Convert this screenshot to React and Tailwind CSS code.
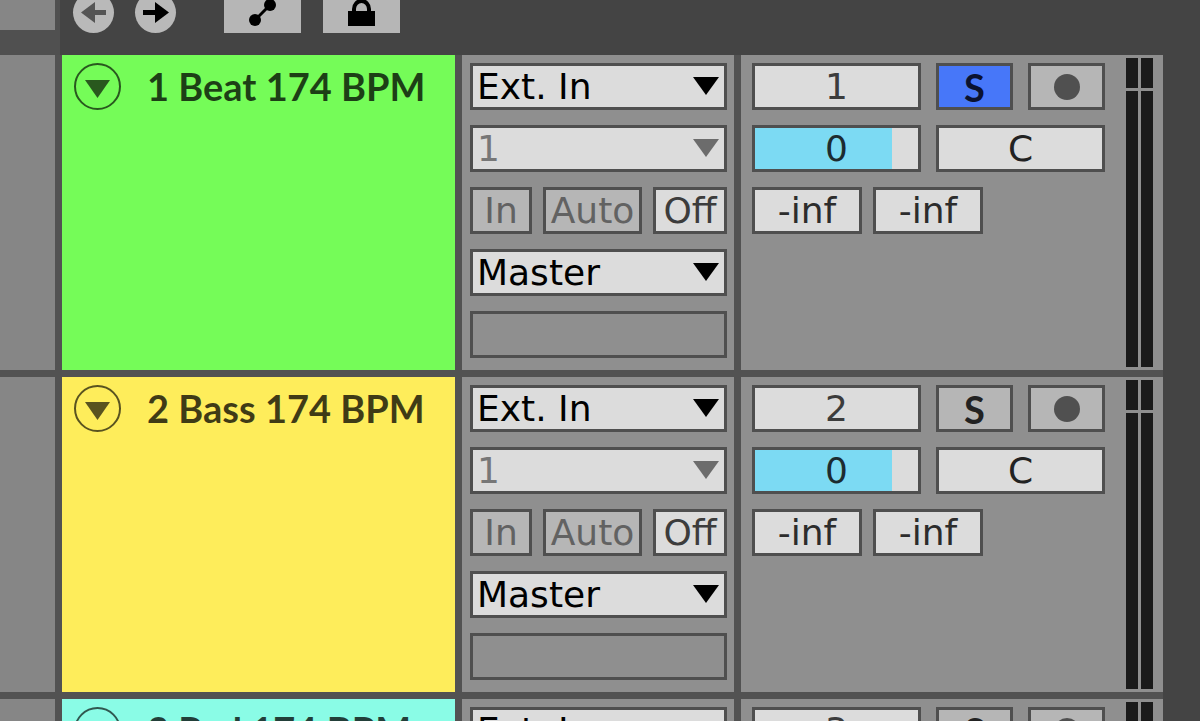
import { useState } from "react";

const initialTracks = [
  { id: 1, name: "1 Beat 174 BPM", color: "bg-[#75fc58]", solo: true, volume: 84 },
  { id: 2, name: "2 Bass 174 BPM", color: "bg-[#feed5b]", solo: false, volume: 84 },
  { id: 3, name: "3 Pad 174 BPM", color: "bg-[#8afce6]", solo: false, volume: 84 },
];

const boxClass = "h-[47px] border-3 border-[#4f4f4f] text-center leading-none";

const Dropdown = ({ label, options, muted }) => (
  <div className="relative">
    <select
      aria-label={label}
      className={`${boxClass} block w-full appearance-none bg-[#dcdcdc] pl-1 text-left ${
        muted ? "text-[#777]" : "text-black"
      }`}
    >
      {options.map((option) => (
        <option key={option}>{option}</option>
      ))}
    </select>
    <svg
      viewBox="0 0 26 18"
      className={`pointer-events-none absolute right-2 top-3.5 h-[18px] w-[26px] ${
        muted ? "text-[#6c6c6c]" : "text-black"
      }`}
    >
      <path d="M0 0h26L13 18z" fill="currentColor" />
    </svg>
  </div>
);

const Monitor = () => {
  const [mode, setMode] = useState("Off");
  const modes = [
    { name: "In", width: "w-[62px]" },
    { name: "Auto", width: "w-[99px]" },
    { name: "Off", width: "w-[74px]" },
  ];

  return (
    <div className="flex justify-between">
      {modes.map(({ name, width }) => (
        <button
          key={name}
          onClick={() => setMode(name)}
          className={`${boxClass} ${width} ${
            mode === name ? "bg-[#dcdcdc] text-[#3c3c3c]" : "bg-[#b6b6b6] text-[#626262]"
          }`}
        >
          {name}
        </button>
      ))}
    </div>
  );
};

const Meter = () => (
  <div className="flex w-3 flex-col gap-[3px]">
    <div className="h-[30px] bg-[#1a1a1a]" />
    <div className="flex-1 bg-[#1a1a1a]" />
  </div>
);

const Track = ({ track }) => {
  const [solo, setSolo] = useState(track.solo);

  return (
    <section className="flex h-[315px] shrink-0 gap-[7px]">
      <div className="w-[55px] shrink-0 bg-[#868686]" />

      {/* name */}
      <div className={`flex flex-1 items-start pl-3 pt-2 ${track.color}`}>
        <button aria-label="Fold track" className="shrink-0">
          <svg viewBox="0 0 47 47" className="size-[47px] text-black/65">
            <circle cx="23.5" cy="23.5" r="22.5" fill="none" stroke="currentColor" strokeWidth="2" />
            <path d="M11 17h25L23.5 35z" fill="currentColor" />
          </svg>
        </button>
        <h2 className="ml-[26px] whitespace-nowrap font-[Lato,sans-serif] text-[38px] font-bold leading-[47px] text-black/75">
          {track.name}
        </h2>
      </div>

      {/* routing */}
      <div className="flex w-[272px] shrink-0 flex-col gap-[15px] bg-[#8f8f8f] pl-2 pr-[7px] pt-2">
        <Dropdown label="Input type" options={["Ext. In", "No Input"]} />
        <Dropdown label="Input channel" options={["1", "2", "1/2"]} muted />
        <Monitor />
        <Dropdown label="Output type" options={["Master", "Sends Only"]} />
        <div className={boxClass} />
      </div>

      {/* mixer */}
      <div className="flex w-[422px] shrink-0 bg-[#8f8f8f] pl-[11px]">
        <div className="flex w-[353px] flex-col gap-[15px] pt-2">
          <div className="flex gap-[15px]">
            <button className={`${boxClass} w-[169px] bg-[#dcdcdc] text-[#3c3c3c]`}>{track.id}</button>
            <button
              aria-pressed={solo}
              onClick={() => setSolo(!solo)}
              className={`${boxClass} w-[77px] font-[Lato,sans-serif] text-[38px] font-bold ${
                solo ? "bg-[#4777f9] text-[#0b1230]" : "bg-[#b6b6b6] text-[#222]"
              }`}
            >
              S
            </button>
            <button aria-label="Arm recording" className={`${boxClass} flex w-[77px] items-center justify-center bg-[#b6b6b6]`}>
              <span className="size-[26px] rounded-full bg-[#505050]" />
            </button>
          </div>
          <div className="flex gap-[15px]">
            <div className={`${boxClass} relative w-[169px] bg-[#dcdcdc]`}>
              <div className="h-full bg-[#7cdaf3]" style={{ width: `${track.volume}%` }} />
              <input
                aria-label="Volume"
                defaultValue="0"
                className="absolute inset-0 w-full bg-transparent text-center text-[#1c2c30]"
              />
            </div>
            <input aria-label="Pan" defaultValue="C" className={`${boxClass} w-[169px] bg-[#dcdcdc] text-[#222]`} />
          </div>
          <div className="flex gap-[11px]">
            <input aria-label="Send A" defaultValue="-inf" className={`${boxClass} w-[110px] bg-[#dcdcdc] text-[#2c2c2c]`} />
            <input aria-label="Send B" defaultValue="-inf" className={`${boxClass} w-[110px] bg-[#dcdcdc] text-[#2c2c2c]`} />
          </div>
        </div>
        <div className="ml-[21px] flex gap-[3px] py-[3px]">
          <Meter />
          <Meter />
        </div>
      </div>
    </section>
  );
};

const Toolbar = () => (
  <header className="flex h-[55px] shrink-0 overflow-hidden">
    <div className="flex w-[60px] shrink-0 flex-col bg-[#505050]">
      <div className="h-[30px] w-[55px] bg-[#868686]" />
    </div>
    <div className="flex flex-1 items-end bg-[#444] pb-[22px] pl-[13px]">
      <button aria-label="Previous locator" className="size-[41px] rounded-full bg-[#b9b9b9] text-[#555]">
        <svg viewBox="0 0 41 41" className="size-[41px]">
          <path d="M33 20.5H20" stroke="currentColor" strokeWidth="5" />
          <path d="M8 20.5L22 10v21z" fill="currentColor" />
        </svg>
      </button>
      <button aria-label="Next locator" className="ml-[21px] size-[41px] rounded-full bg-[#b9b9b9] text-black">
        <svg viewBox="0 0 41 41" className="size-[41px]">
          <path d="M8 20.5h14" stroke="currentColor" strokeWidth="5" />
          <path d="M34 20.5L20 10v21z" fill="currentColor" />
        </svg>
      </button>
      <button aria-label="Automation mode" className="ml-12 h-[47px] w-[77px] bg-[#b6b6b6]">
        <svg viewBox="0 0 77 47" className="h-[47px] w-[77px]">
          <path d="M31 34L46 19" stroke="#000" strokeWidth="3" />
          <circle cx="31" cy="34" r="6" />
          <circle cx="46" cy="19" r="6" />
        </svg>
      </button>
      <button aria-label="Lock envelopes" className="ml-[22px] h-[47px] w-[77px] bg-[#b6b6b6]">
        <svg viewBox="0 0 77 47" className="h-[47px] w-[77px]">
          <path d="M31 27v-4a7.500 8 0 0 1 15 0v4" fill="none" stroke="#000" strokeWidth="4" />
          <rect x="25" y="25" width="27" height="15" />
        </svg>
      </button>
    </div>
  </header>
);

const App = () => {
  return (
    <main className="flex h-screen flex-col overflow-hidden bg-[#444] font-['DejaVu_Sans',sans-serif] text-[36px]">
      <Toolbar />
      <div className="mr-[37px] flex flex-col gap-[7px] bg-[#525252]">
        {initialTracks.map((track) => (
          <Track key={track.id} track={track} />
        ))}
      </div>
    </main>
  );
};

export default App;
